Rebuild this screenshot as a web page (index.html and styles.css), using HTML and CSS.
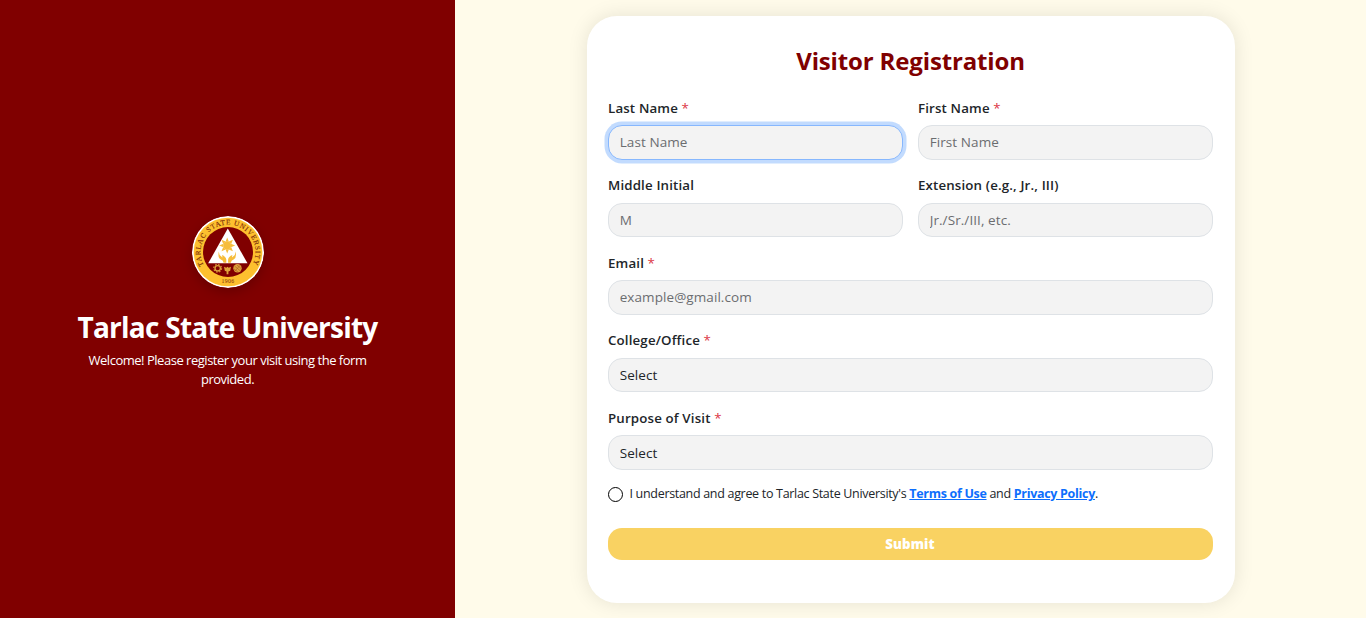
FILE: index.html
```html
<!DOCTYPE html>
<html lang="en">
<head>
<meta charset="utf-8">
<title>Visitor Registration</title>
<link rel="stylesheet" href="styles.css">
</head>
<body>
<div class="page">
  <aside class="brand">
    <svg class="seal" viewBox="0 0 72 72" width="72" height="72" role="img" aria-label="Tarlac State University seal">
      <defs>
        <path id="arc-top" d="M11.800 49.200 A27.500 27.500 0 1 1 60.200 49.200"/>
      </defs>
      <circle cx="36" cy="36" r="36" fill="#fff"/>
      <circle cx="36" cy="36" r="34.300" fill="#fdc02f"/>
      <circle cx="36" cy="36" r="25" fill="#800000"/>
      <path d="M35.800 12.500 L55.500 47.300 H16.200 Z" fill="#fff"/>
      <g fill="#f6bd3c">
        <circle cx="35.200" cy="29.500" r="3.900"/>
        <path d="M35.200 21.500 l1.700 4.300 h-3.400z M35.200 37.500 l1.700-4.300 h-3.400z M27.200 29.500 l4.300-1.700 v3.400z M43.200 29.500 l-4.300-1.700 v3.400z M29.500 23.800 l4.100 1.700 -2.400 2.400z M40.900 23.800 l-4.100 1.700 2.400 2.400z M29.500 35.200 l4.100-1.700 -2.400-2.400z M40.900 35.200 l-4.100-1.700 2.400-2.400z"/>
        <path d="M26.800 35.500 l.8 3.500 2.900 2.500 -.5-2.500 q3.800 1.500 4.300 4.500 v3.300 h-2.800 q0-2.300-2.700-3.300 q-3.300-1.500-2-8z M43.600 35.500 l-.8 3.500 -2.900 2.500 .5-2.500 q-3.800 1.500-4.300 4.500 v3.300 h2.800 q0-2.300 2.700-3.300 q3.300-1.500 2-8z"/>
      </g>
      <circle cx="25.700" cy="52.300" r="2.700" fill="none" stroke="#dca03a" stroke-width="1.300"/>
      <circle cx="25.700" cy="52.300" r="3.900" fill="none" stroke="#dca03a" stroke-width="1.100" stroke-dasharray="1.500 1.560"/>
      <path d="M32 50.800 l2.300 1 1.200-1 1.200 1 2.300-1 -.8 4 -1.800.8 v2.700 h-1.800 v-2.700 l-1.800-.8z" fill="#e0a23a"/>
      <circle cx="45.500" cy="52.300" r="4.200" fill="#dca03a"/>
      <path d="M42.500 50 l6 5 M42 53 l4 3 M45 49 l4 3.500 M47.800 49.500 l-5 6" stroke="#a85b20" stroke-width=".6" fill="none"/>
      <text class="seal-name"><textPath href="#arc-top" startOffset="0" textLength="112" lengthAdjust="spacing">TARLAC STATE UNIVERSITY</textPath></text>
      <text class="seal-year" x="36" y="66.600" text-anchor="middle">1906</text>
    </svg>
    <h1 class="brand-name">Tarlac State University</h1>
    <p class="brand-text">Welcome! Please register your visit using the form<br>provided.</p>
  </aside>
  <main class="content">
    <form class="card">
      <h2 class="title">Visitor Registration</h2>
      <div class="fields">
        <div class="field">
          <label class="label" for="last">Last Name <span class="req">*</span></label>
          <input class="input focused" id="last" placeholder="Last Name">
        </div>
        <div class="field">
          <label class="label" for="first">First Name <span class="req">*</span></label>
          <input class="input" id="first" placeholder="First Name">
        </div>
        <div class="field">
          <label class="label" for="middle">Middle Initial</label>
          <input class="input" id="middle" placeholder="M">
        </div>
        <div class="field">
          <label class="label" for="ext">Extension (e.g., Jr., III)</label>
          <input class="input" id="ext" placeholder="Jr./Sr./III, etc.">
        </div>
        <div class="field wide">
          <label class="label" for="email">Email <span class="req">*</span></label>
          <input class="input" id="email" placeholder="example@gmail.com">
        </div>
        <div class="field wide">
          <label class="label" for="office">College/Office <span class="req">*</span></label>
          <select class="input" id="office"><option>Select</option></select>
        </div>
        <div class="field wide">
          <label class="label" for="purpose">Purpose of Visit <span class="req">*</span></label>
          <select class="input" id="purpose"><option>Select</option></select>
        </div>
      </div>
      <div class="agree">
        <input class="check" type="checkbox" id="agree">
        <label class="agree-text" for="agree">I understand and agree to Tarlac State University's <a class="link" href="#">Terms of Use</a> and <a class="link" href="#">Privacy Policy</a>.</label>
      </div>
      <button class="submit" type="button">Submit</button>
    </form>
  </main>
</div>
</body>
</html>
```
FILE: styles.css
```css
* { box-sizing: border-box; }
body {
  margin: 0;
  font-family: "Open Sans", "Noto Sans", sans-serif;
  color: #212529;
  background: #fffbea;
}
.page { display: flex; height: 618px; overflow: hidden; }
.brand {
  width: 455px;
  flex: none;
  padding-top: 216px;
  display: flex;
  flex-direction: column;
  align-items: center;
  background: #800000;
  color: #fff;
  text-align: center;
}
.seal { display: block; border-radius: 50%; box-shadow: 0 4px 12px rgba(0, 0, 0, .2); }
.seal-name { font: 400 7.200px "Liberation Serif", serif; fill: #7a2a08; stroke: #7a2a08; stroke-width: .12px; }
.seal-year { font: 400 5.800px "Liberation Serif", serif; fill: #7a2a08; letter-spacing: .4px; }
.brand-name {
  margin: 22px 0 0;
  font-size: 28px;
  line-height: 34px;
  font-weight: 700;
  letter-spacing: -.750px;
  white-space: nowrap;
}
.brand-text { margin: 7px 0 0; font-size: 13px; line-height: 19px; letter-spacing: -.480px; white-space: nowrap; }
.content { flex: 1; display: flex; justify-content: center; padding-top: 16px; }
.card {
  width: 648px;
  height: 587px;
  padding: 29px 21px 0 21px;
  background: #fff;
  border-radius: 30px;
  box-shadow: 0 0 20px rgba(0, 0, 0, .1);
}
.title { margin: 0; font-size: 24px; line-height: 32px; font-weight: 700; letter-spacing: -.150px; color: #800000; text-align: center; }
.fields { display: grid; grid-template-columns: 1fr 1fr; column-gap: 15px; row-gap: 15.800px; margin: 20.900px 1px 0 0; }
.field { display: flex; flex-direction: column; }
.wide { grid-column: 1 / -1; }
.label { height: 27.300px; padding-left: .5px; line-height: 20.400px; font-size: 13.300px; font-weight: 600; letter-spacing: .150px; white-space: nowrap; }
.req { color: #dc3545; font-weight: 400; }
.input {
  width: 100%;
  height: 34.450px;
  padding: 0 11.200px;
  border: 1px solid #dee2e6;
  border-radius: 14px;
  background: #f3f3f3;
  font-family: inherit;
  font-size: 13.500px;
  letter-spacing: .080px;
  color: #212529;
  appearance: none;
  outline: none;
}
.input::placeholder { color: #6b6d70; opacity: 1; }
.focused { border-color: #86b7fe; box-shadow: 0 0 0 3.500px rgba(13, 110, 253, .25); }
.agree { display: flex; align-items: flex-start; gap: 7px; margin-top: 14px; height: 20px; }
.check { appearance: none; flex: none; width: 15px; height: 15px; margin: 3px 0 0; border: 1px solid #000; border-radius: 50%; background: #fff; }
.agree-text { font-size: 12.500px; line-height: 19px; letter-spacing: -.310px; white-space: nowrap; }
.link { color: #0d6efd; font-weight: 700; }
.submit {
  display: block;
  width: 605px;
  height: 32px;
  margin-top: 24px;
  border: 0;
  border-radius: 14px;
  background: #f9d262;
  color: #fff;
  font: 800 13.300px "Open Sans", sans-serif;
  letter-spacing: .1px;
}
```
